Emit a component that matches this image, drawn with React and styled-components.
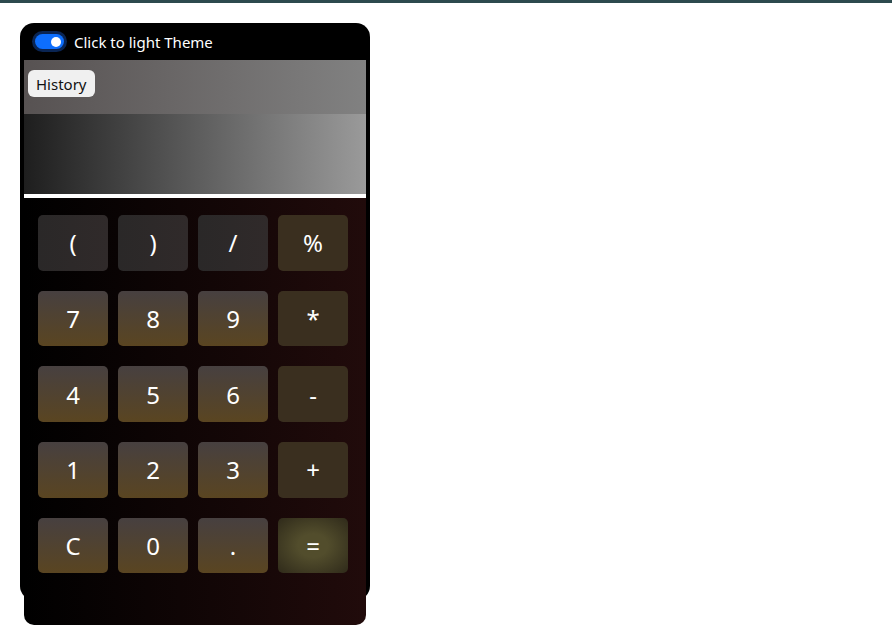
import React from 'react';
import styled, { createGlobalStyle } from 'styled-components';

const Global = createGlobalStyle`
  html, body {
    margin: 0;
    padding: 0;
    background: #fff;
    font-family: "Noto Sans", "Open Sans", sans-serif;
  }
  body {
    border-top: 3px solid #2d4a4e;
  }
`;

const Page = styled.div`
  padding: 20px 0 40px 20px;
`;

const Calc = styled.div`
  display: flow-root;
  width: 350px;
  background: #000;
  border-radius: 14px;
  padding: 0 4px;
  box-sizing: border-box;
`;

const Header = styled.div`
  height: 37px;
  display: flex;
  align-items: center;
  gap: 10px;
  padding-left: 11px;
  color: #fff;
  font-size: 15px;
`;

const Switch = styled.span`
  position: relative;
  width: 29px;
  height: 15px;
  border-radius: 8px;
  background: #0d6efd;
  box-shadow: 0 0 0 3px #0a2553;
  &::after {
    content: '';
    position: absolute;
    right: 3px;
    top: 2.5px;
    width: 10px;
    height: 10px;
    border-radius: 50%;
    background: #fff;
  }
`;

const HistoryBar = styled.div`
  height: 54px;
  box-sizing: border-box;
  background: linear-gradient(to right, #575252, #818181);
  display: flex;
  align-items: flex-start;
  padding: 10px 0 0 4px;
`;

const HistoryButton = styled.button`
  font-family: inherit;
  font-size: 15px;
  color: #111;
  background: #f0f0f0;
  border: none;
  border-radius: 6px;
  height: 27px;
  padding: 0 8px;
`;

const Display = styled.div`
  height: 80px;
  background: linear-gradient(to right, #1e1e1e, #9a9a9a);
  border-bottom: 4px solid #fff;
`;

const Keypad = styled.div`
  height: 427px;
  margin-bottom: -25px;
  border-radius: 0 0 10px 10px;
  background: linear-gradient(to right, #000, #210b0b);
  display: grid;
  grid-template-columns: repeat(4, 70px);
  grid-auto-rows: 55.7px;
  column-gap: 10px;
  row-gap: 20px;
  padding: 17px 18px 0 14px;
  box-sizing: border-box;
  align-content: start;
  position: relative;
`;

const backgrounds = {
  num: 'linear-gradient(to bottom, #474040, #5a4521)',
  top: 'linear-gradient(to right, #2a2828, #302a2a)',
  op: '#3a2f1f',
  eq: 'radial-gradient(ellipse at center, #524d2c 30%, #2f2a1a 100%)',
};

const Key = styled.button`
  font-family: inherit;
  font-size: 24px;
  color: #fff;
  border: none;
  border-radius: 5px;
  background: ${(p) => backgrounds[p.$kind]};
`;

const keys = [
  ['(', 'top'], [')', 'top'], ['/', 'top'], ['%', 'op'],
  ['7', 'num'], ['8', 'num'], ['9', 'num'], ['*', 'op'],
  ['4', 'num'], ['5', 'num'], ['6', 'num'], ['-', 'op'],
  ['1', 'num'], ['2', 'num'], ['3', 'num'], ['+', 'op'],
  ['C', 'num'], ['0', 'num'], ['.', 'num'], ['=', 'eq'],
];

export default function App() {
  return (
    <Page>
      <Global />
      <Calc>
        <Header>
          <Switch />
          Click to light Theme
        </Header>
        <HistoryBar>
          <HistoryButton>History</HistoryButton>
        </HistoryBar>
        <Display />
        <Keypad>
          {keys.map(([label, kind]) => (
            <Key key={label} $kind={kind}>{label}</Key>
          ))}
        </Keypad>
      </Calc>
    </Page>
  );
}
